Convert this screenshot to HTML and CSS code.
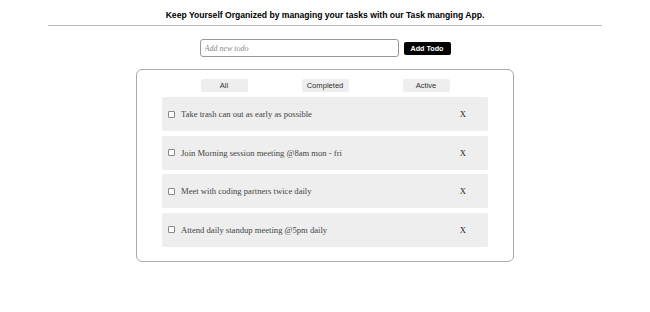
FILE: index.html
```html
<!DOCTYPE html>
<html lang="en">
<head>
  <meta charset="UTF-8">
  <meta name="viewport" content="width=device-width, initial-scale=1.0">
  <title>Todo App</title>
  <link rel="stylesheet" href="styles.css">
</head>
<body>
  <header class="header">
    <h1 class="title">Keep Yourself Organized by managing your tasks with our Task manging App.</h1>
  </header>
  <hr class="divider">

  <form class="add-row" onsubmit="return false">
    <input type="text" class="add-input" placeholder="Add new todo">
    <button type="submit" class="add-btn">Add Todo</button>
  </form>

  <div class="board">
    <div class="filters">
      <button class="filter-btn">All</button>
      <button class="filter-btn">Completed</button>
      <button class="filter-btn">Active</button>
    </div>

    <ul class="todo-list">
      <li class="todo-item">
        <input type="checkbox" class="todo-check">
        <span class="todo-text">Take trash can out as early as possible</span>
        <span class="todo-remove">X</span>
      </li>
      <li class="todo-item">
        <input type="checkbox" class="todo-check">
        <span class="todo-text">Join Morning session meeting @8am mon - fri</span>
        <span class="todo-remove">X</span>
      </li>
      <li class="todo-item">
        <input type="checkbox" class="todo-check">
        <span class="todo-text">Meet with coding partners twice daily</span>
        <span class="todo-remove">X</span>
      </li>
      <li class="todo-item">
        <input type="checkbox" class="todo-check">
        <span class="todo-text">Attend daily standup meeting @5pm daily</span>
        <span class="todo-remove">X</span>
      </li>
    </ul>
  </div>
</body>
</html>
```

FILE: styles.css
```css
body {
  margin: 0;
  font-family: "Liberation Sans", Arial, sans-serif;
  background-color: #fff;
  color: #000;
}

.header {
  text-align: center;
  padding-top: 9px;
}

.title {
  margin: 0;
  font-size: 8.6px;
  font-weight: bold;
  line-height: 12px;
}

.divider {
  width: 554px;
  margin: 4px auto 0;
  border: none;
  border-top: 1px solid #bbb;
}

.add-row {
  display: flex;
  justify-content: center;
  align-items: center;
  gap: 5px;
  margin-top: 13px;
}

.add-input {
  box-sizing: border-box;
  width: 199px;
  height: 18px;
  padding: 0 4px;
  border: 1px solid #999;
  border-radius: 3px;
  font-family: "Liberation Serif", "Times New Roman", serif;
  font-size: 8px;
}

.add-input::placeholder {
  font-style: italic;
  color: #888;
}

.add-btn {
  width: 47px;
  height: 13px;
  padding: 0;
  background-color: #000;
  color: #fff;
  border: none;
  border-radius: 2px;
  font-family: "Liberation Sans", Arial, sans-serif;
  font-size: 7.2px;
  font-weight: bold;
}

.board {
  box-sizing: border-box;
  width: 378px;
  margin: 12px auto 0;
  padding: 9px 25px 14px;
  border: 1px solid #aaa;
  border-radius: 6px;
}

.filters {
  display: flex;
  justify-content: center;
  gap: 54px;
}

.filter-btn {
  width: 47px;
  height: 13px;
  padding: 0;
  background-color: #eee;
  color: #333;
  border: none;
  border-radius: 2px;
  font-family: "Liberation Sans", Arial, sans-serif;
  font-size: 7.6px;
}

.todo-list {
  list-style: none;
  margin: 5px 0 0;
  padding: 0;
  display: flex;
  flex-direction: column;
  gap: 4.5px;
}

.todo-item {
  display: flex;
  align-items: center;
  height: 34px;
  padding: 0 22px 0 6px;
  background-color: #eee;
  border-radius: 2px;
  font-family: "Liberation Serif", "Times New Roman", serif;
  font-size: 8.6px;
  color: #444;
}

.todo-check {
  appearance: none;
  width: 7px;
  height: 7px;
  margin: 0 6px 0 0;
  border: 1px solid #888;
  border-radius: 1px;
  background-color: #fff;
}

.todo-text {
  flex: 1;
}

.todo-remove {
  color: #222;
}
```
